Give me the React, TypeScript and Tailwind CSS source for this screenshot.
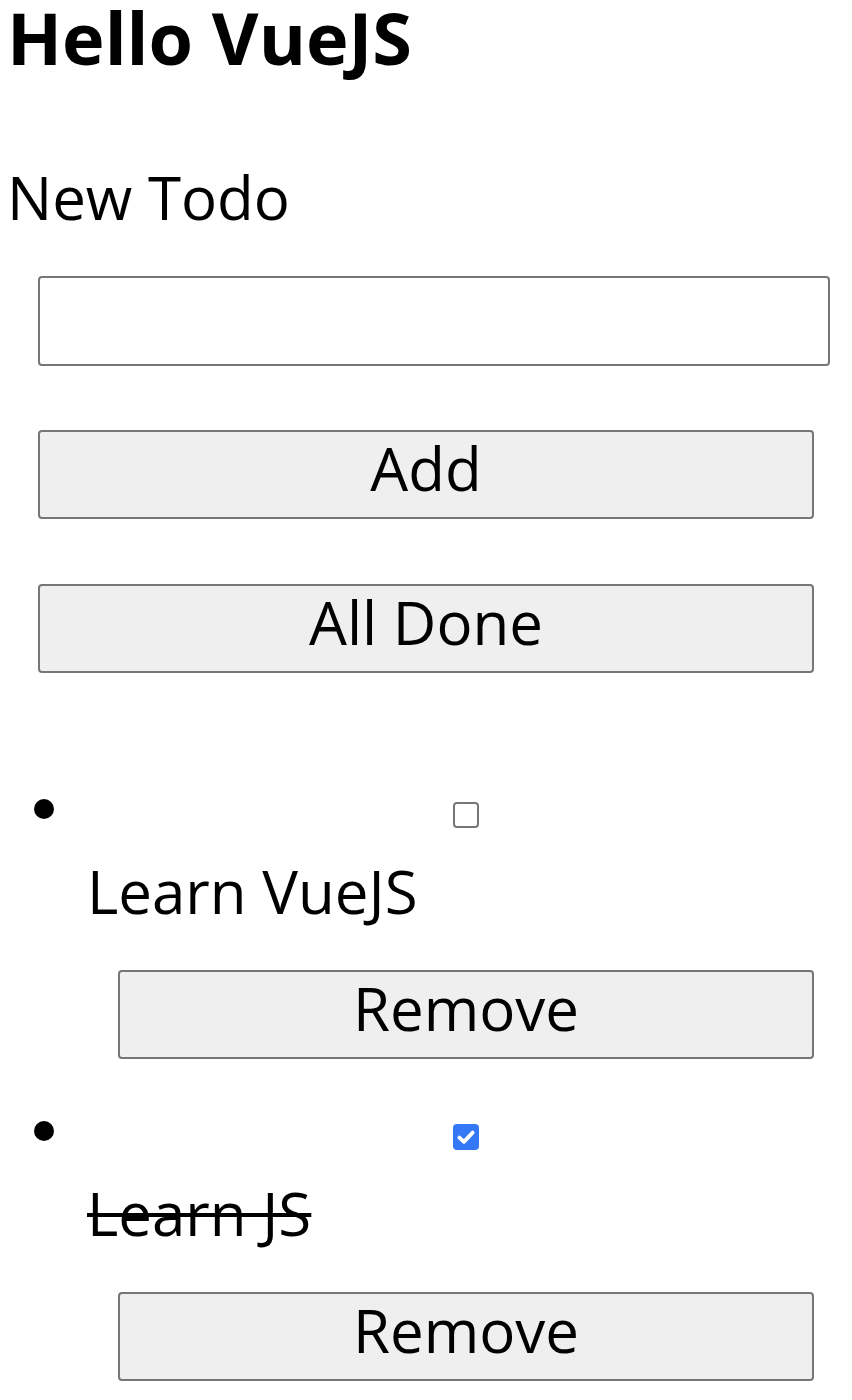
import React from 'react';

const todos = [
  { id: 1, text: 'Learn VueJS', done: false },
  { id: 2, text: 'Learn JS', done: true },
];

function Checkbox({ checked }: { checked: boolean }) {
  if (checked) {
    return (
      <span className="flex h-[26px] w-[26px] items-center justify-center rounded-[4px] bg-[#3478f6]">
        <svg viewBox="0 0 16 16" className="h-[22px] w-[22px]" fill="none">
          <path d="M3.2 8.4 6.5 11.5 12.8 4.8" stroke="white" strokeWidth="2.8" strokeLinecap="round" strokeLinejoin="round" />
        </svg>
      </span>
    );
  }
  return <span className="block h-[26px] w-[26px] rounded-[4px] border-2 border-[#767676] bg-white" />;
}

function Button({ children }: { children: React.ReactNode }) {
  return (
    <button className="mx-[31px] flex h-[89px] items-center justify-center rounded-[4px] border-2 border-[#767676] bg-[#efefef] pb-[13px] text-[60px] leading-[74px] text-black">
      {children}
    </button>
  );
}

export default function App() {
  return (
    <main className="min-h-[1400px] bg-white px-[7px] text-black" style={{ fontFamily: '"Open Sans", "Noto Sans", sans-serif' }}>
      <h1 className="h-[74px] text-[72px] font-bold leading-[74px]">Hello VueJS</h1>

      <label className="mt-[80px] block text-[60px] leading-[87px]">New Todo</label>
      <input className="ml-[31px] mt-[35px] block h-[90px] w-[792px] rounded-[4px] border-2 border-[#767676] bg-white px-3 text-[60px] outline-none" />

      <div className="mt-[64px] flex flex-col gap-[65px]">
        <Button>Add</Button>
        <Button>All Done</Button>
      </div>

      <ul className="mt-[106px] flex flex-col gap-[42px]">
        {todos.map((todo) => (
          <li key={todo.id} className="flex">
            <span className="ml-[27px] mt-[20px] h-[20px] w-[20px] shrink-0 rounded-full bg-black" />
            <div className="ml-[33px] flex flex-1 flex-col">
              <div className="flex h-[69px] justify-center pt-[23px]">
                <Checkbox checked={todo.done} />
              </div>
              <span className={`text-[60px] leading-[87px] ${todo.done ? 'line-through decoration-[4px]' : ''}`}>{todo.text}</span>
              <div className="mt-[35px] flex flex-col">
                <Button>Remove</Button>
              </div>
            </div>
          </li>
        ))}
      </ul>
    </main>
  );
}
